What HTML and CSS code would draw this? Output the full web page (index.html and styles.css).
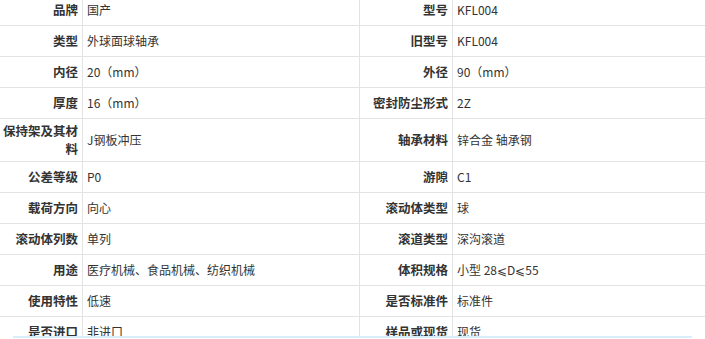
FILE: index.html
```html
<!DOCTYPE html>
<html lang="zh-CN">
<head>
<meta charset="utf-8">
<title>参数</title>
<link rel="stylesheet" href="styles.css">
</head>
<body>
<div class="spec">
  <div class="k">品牌</div><div class="v">国产</div><div class="k">型号</div><div class="v">KFL004</div>
  <div class="k">类型</div><div class="v">外球面球轴承</div><div class="k">旧型号</div><div class="v">KFL004</div>
  <div class="k">内径</div><div class="v">20（mm）</div><div class="k">外径</div><div class="v">90（mm）</div>
  <div class="k">厚度</div><div class="v">16（mm）</div><div class="k">密封防尘形式</div><div class="v">2Z</div>
  <div class="k">保持架及其材料</div><div class="v">J钢板冲压</div><div class="k">轴承材料</div><div class="v">锌合金 轴承钢</div>
  <div class="k">公差等级</div><div class="v">P0</div><div class="k">游隙</div><div class="v">C1</div>
  <div class="k">载荷方向</div><div class="v">向心</div><div class="k">滚动体类型</div><div class="v">球</div>
  <div class="k">滚动体列数</div><div class="v">单列</div><div class="k">滚道类型</div><div class="v">深沟滚道</div>
  <div class="k">用途</div><div class="v">医疗机械、食品机械、纺织机械</div><div class="k">体积规格</div><div class="v">小型 28⩽D⩽55</div>
  <div class="k">使用特性</div><div class="v">低速</div><div class="k">是否标准件</div><div class="v">标准件</div>
  <div class="k">是否进口</div><div class="v">非进口</div><div class="k">样品或现货</div><div class="v">现货</div>
</div>
<div class="bottom-bar"></div>
</body>
</html>
```
FILE: styles.css
```css
html, body {
  margin: 0;
  padding: 0;
  background: #fff;
  overflow: hidden;
}
body {
  width: 705px;
  height: 339px;
  position: relative;
  font-family: "Noto Sans CJK SC", "Liberation Sans", sans-serif;
  color: #333;
}
.spec {
  display: grid;
  grid-template-columns: 82px 276px 92px 1fr;
  gap: 1px;
  background: #e3e3e3;
  margin-top: -5px;
  width: 705px;
}
.k, .v {
  background: #fff;
  min-height: 30px;
  box-sizing: border-box;
  padding: 3px 5px;
  line-height: 18px;
  display: flex;
  align-items: center;
}
.k {
  justify-content: flex-end;
  text-align: right;
  font-weight: bold;
  font-size: 12.5px;
  padding-left: 1px;
  padding-right: 4px;
}
.v {
  font-size: 12px;
  padding-left: 4px;
}
.bottom-bar {
  position: absolute;
  left: 13px;
  top: 336px;
  width: 679px;
  height: 10px;
  background: #fff;
  border-top: 2px solid #d8eefb;
}
```
